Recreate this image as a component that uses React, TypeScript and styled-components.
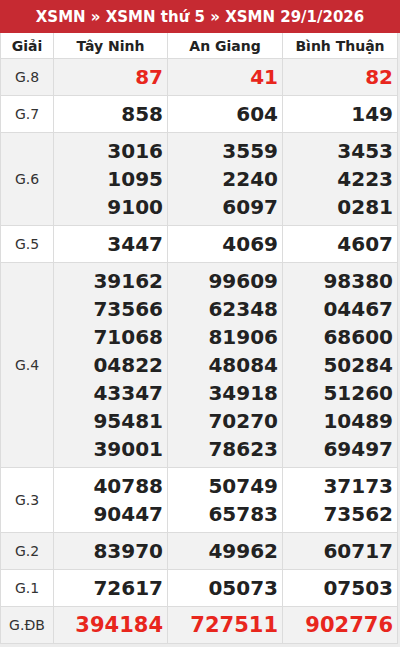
import styled, { createGlobalStyle } from "styled-components";

const GlobalStyle = createGlobalStyle`
  body {
    margin: 0;
    background: #ececec;
    font-family: "DejaVu Sans", sans-serif;
  }
`;

const Wrapper = styled.div`
  width: 400px;
`;

const Title = styled.div`
  height: 33px;
  background-color: #c62a32;
  color: #fff;
  font-weight: bold;
  font-size: 15px;
  display: flex;
  align-items: center;
  justify-content: center;
`;

const Table = styled.table`
  width: 398px;
  border-collapse: collapse;
  table-layout: fixed;
  background: #fff;
`;

const HeadCell = styled.th`
  height: 25px;
  padding: 0;
  border: 1px solid #dcdcdc;
  border-top: none;
  font-size: 14px;
  font-weight: bold;
  color: #222;
  text-align: center;
`;

const Row = styled.tr<{ $shade: boolean }>`
  background-color: ${(p) => (p.$shade ? "#f2f2f2" : "#fff")};
`;

const Label = styled.td`
  border: 1px solid #dcdcdc;
  text-align: center;
  font-size: 14px;
  color: #333;
  padding: 0;
`;

const Cell = styled.td`
  border: 1px solid #dcdcdc;
  padding: 4px 4px 4px 0;
  text-align: right;
  vertical-align: middle;
`;

const Num = styled.div<{ $red?: boolean; $big?: boolean }>`
  font-size: ${(p) => (p.$big ? "21px" : "20px")};
  line-height: 28px;
  font-weight: bold;
  color: ${(p) => (p.$red ? "#e8261d" : "#222")};
`;

const provinces = ["Tây Ninh", "An Giang", "Bình Thuận"];

const rows: { label: string; values: string[][]; red?: boolean; big?: boolean }[] = [
  { label: "G.8", values: [["87"], ["41"], ["82"]], red: true },
  { label: "G.7", values: [["858"], ["604"], ["149"]] },
  {
    label: "G.6",
    values: [
      ["3016", "1095", "9100"],
      ["3559", "2240", "6097"],
      ["3453", "4223", "0281"],
    ],
  },
  { label: "G.5", values: [["3447"], ["4069"], ["4607"]] },
  {
    label: "G.4",
    values: [
      ["39162", "73566", "71068", "04822", "43347", "95481", "39001"],
      ["99609", "62348", "81906", "48084", "34918", "70270", "78623"],
      ["98380", "04467", "68600", "50284", "51260", "10489", "69497"],
    ],
  },
  {
    label: "G.3",
    values: [
      ["40788", "90447"],
      ["50749", "65783"],
      ["37173", "73562"],
    ],
  },
  { label: "G.2", values: [["83970"], ["49962"], ["60717"]] },
  { label: "G.1", values: [["72617"], ["05073"], ["07503"]] },
  { label: "G.ĐB", values: [["394184"], ["727511"], ["902776"]], red: true, big: true },
];

export default function App() {
  return (
    <Wrapper>
      <GlobalStyle />
      <Title>XSMN » XSMN thứ 5 » XSMN 29/1/2026</Title>
      <Table>
        <colgroup>
          <col style={{ width: 53 }} />
          <col style={{ width: 114 }} />
          <col style={{ width: 115 }} />
          <col />
        </colgroup>
        <thead>
          <tr>
            <HeadCell>Giải</HeadCell>
            {provinces.map((p) => (
              <HeadCell key={p}>{p}</HeadCell>
            ))}
          </tr>
        </thead>
        <tbody>
          {rows.map((r, i) => (
            <Row key={r.label} $shade={i % 2 === 0}>
              <Label>{r.label}</Label>
              {r.values.map((col, j) => (
                <Cell key={j}>
                  {col.map((n) => (
                    <Num key={n} $red={r.red} $big={r.big}>
                      {n}
                    </Num>
                  ))}
                </Cell>
              ))}
            </Row>
          ))}
        </tbody>
      </Table>
    </Wrapper>
  );
}
